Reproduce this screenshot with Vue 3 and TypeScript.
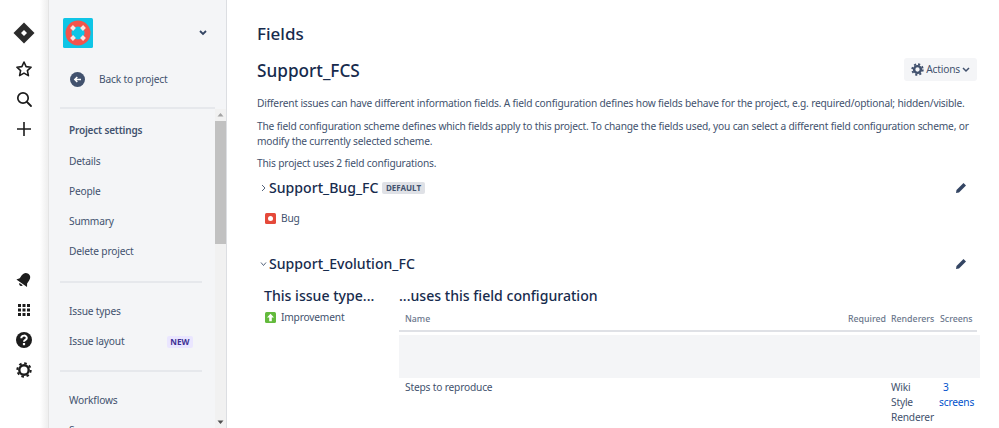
<script setup lang="ts">
const settings = ["Details", "People", "Summary", "Delete project"];
</script>

<template>
  <div class="page">
    <nav class="global">
      <div class="global-group top">
        <svg class="logo" width="22" height="22" viewBox="0 0 22 22"><path fill="#2b2b2b" d="M11 0.500L21.500 11 11 21.500 0.500 11z"/><path fill="#fff" d="M11 8l3 3-3 3-3-3z"/></svg>
        <svg width="18" height="18" viewBox="0 0 18 18"><path fill="none" stroke="#1c1c1c" stroke-width="1.600" stroke-linejoin="round" d="M9 2l2.100 4.600 5 .6-3.700 3.400 1 5L9 13.100l-4.400 2.500 1-5L1.900 7.200l5-.6z"/></svg>
        <svg width="18" height="18" viewBox="0 0 18 18"><circle cx="8" cy="8" r="5.200" fill="none" stroke="#1c1c1c" stroke-width="1.700"/><path stroke="#1c1c1c" stroke-width="1.800" stroke-linecap="round" d="M12 12l4 4"/></svg>
        <svg width="18" height="18" viewBox="0 0 18 18"><path stroke="#1c1c1c" stroke-width="1.600" d="M9 2v14M2 9h14"/></svg>
      </div>
      <div class="global-group bottom">
        <svg width="18" height="18" viewBox="0 0 18 18"><g transform="rotate(35 9 9)" fill="#1c1c1c"><path d="M9 1.500c-3 0-4.500 2.300-4.500 5v3.500L2.500 13h13l-2-3V6.500c0-2.700-1.500-5-4.500-5z"/><path d="M7 14h4c0 2.400-4 2.400-4 0z"/></g></svg>
        <svg width="18" height="18" viewBox="0 0 18 18"><g fill="#1c1c1c"><rect v-for="c in 9" :key="c" :x="3 + ((c - 1) % 3) * 4.500" :y="3 + Math.floor((c - 1) / 3) * 4.500" width="3" height="3"/></g></svg>
        <svg width="18" height="18" viewBox="0 0 18 18"><circle cx="9" cy="9" r="8" fill="#1c1c1c"/><path fill="none" stroke="#fff" stroke-width="2" d="M6.300 7.200c0-3.400 5.500-3.400 5.500-.2 0 1.800-2.800 2-2.800 3.800"/><rect x="7.900" y="12" width="2.200" height="2.200" fill="#fff"/></svg>
        <svg width="18" height="18" viewBox="0 0 18 18"><circle cx="9" cy="9" r="4.700" fill="none" stroke="#1c1c1c" stroke-width="2.400"/><circle cx="9" cy="9" r="6.700" fill="none" stroke="#1c1c1c" stroke-width="2" stroke-dasharray="2.600 2.660"/></svg>
      </div>
    </nav>

    <aside class="sidebar">
      <div class="side-head">
        <div class="project">
          <svg class="avatar" width="30" height="30" viewBox="0 0 30 30">
            <rect width="30" height="30" rx="1.500" fill="#0fc5e6"/>
            <circle cx="15" cy="15" r="9.500" fill="none" stroke="#f4544c" stroke-width="6"/>
            <path stroke="#fbe6e4" stroke-width="4" d="M8.500 8.500l3 3M21.500 8.500l-3 3M8.500 21.500l3-3M21.500 21.500l-3-3"/>
          </svg>
          <svg class="caret" width="10" height="8" viewBox="0 0 10 8"><path fill="none" stroke="#344563" stroke-width="1.800" d="M2 2l3 3 3-3"/></svg>
        </div>
        <div class="back">
          <svg width="15" height="15" viewBox="0 0 15 15"><circle cx="7.500" cy="7.500" r="7.500" fill="#42526e"/><path fill="none" stroke="#fff" stroke-width="1.500" d="M11 7.500H5M7.300 5L4.800 7.500 7.300 10"/></svg>
          <span>Back to project</span>
        </div>
      </div>
      <div class="side-body">
        <div class="menu">
          <div class="menu-title">Project settings</div>
          <div v-for="item in settings" :key="item" class="menu-item">{{ item }}</div>
          <div class="sep"></div>
          <div class="menu-item">Issue types</div>
          <div class="menu-item">Issue layout<span class="lozenge-new">NEW</span></div>
          <div class="sep short"></div>
          <div class="menu-item">Workflows</div>
          <div class="menu-item">Screens</div>
        </div>
        <div class="scrollbar">
          <svg width="11" height="12" viewBox="0 0 11 12"><path fill="#a3a3a3" d="M5.500 4l3 3.500h-6z"/></svg>
          <div class="thumb"></div>
          <div class="track"></div>
          <svg width="11" height="12" viewBox="0 0 11 12"><path fill="#505050" d="M5.500 8l3-3.500h-6z"/></svg>
        </div>
      </div>
    </aside>

    <main class="content">
      <h1>Fields</h1>
      <div class="title-row">
        <h2>Support_FCS</h2>
        <button class="actions">
          <svg width="13" height="13" viewBox="0 0 18 18"><circle cx="9" cy="9" r="4.700" fill="none" stroke="#42526e" stroke-width="3.400"/><circle cx="9" cy="9" r="7.300" fill="none" stroke="#42526e" stroke-width="2.600" stroke-dasharray="2.900 2.830"/></svg>
          <span>Actions</span>
          <svg width="8" height="6" viewBox="0 0 8 6"><path fill="none" stroke="#42526e" stroke-width="1.500" d="M1 1l3 3 3-3"/></svg>
        </button>
      </div>
      <p class="first">Different issues can have different information fields. A field configuration defines how fields behave for the project, e.g. required/optional; hidden/visible.</p>
      <p>The field configuration scheme defines which fields apply to this project. To change the fields used, you can select a different field configuration scheme, or modify the currently selected scheme.</p>
      <p>This project uses 2 field configurations.</p>

      <section class="fc-head bug-head">
        <svg class="twist" width="7" height="8" viewBox="0 0 7 8"><path fill="none" stroke="#42526e" stroke-width="0.900" d="M2 1l3 3-3 3"/></svg>
        <h3>Support_Bug_FC</h3>
        <span class="lozenge">DEFAULT</span>
        <svg class="pencil" width="12" height="12" viewBox="0 0 12 12"><path fill="#344563" d="M8.500 1l2.500 2.500-7 7L1 11l.5-3z"/></svg>
      </section>
      <div class="issue bug">
        <svg width="11" height="11" viewBox="0 0 11 11"><rect width="11" height="11" rx="1.500" fill="#e5493a"/><circle cx="5.500" cy="5.500" r="2.500" fill="#fff"/></svg>
        <span>Bug</span>
      </div>

      <section class="fc-head evo-head">
        <svg class="twist" width="7" height="8" viewBox="0 0 7 8"><path fill="none" stroke="#42526e" stroke-width="0.900" d="M1 2.500l2.500 3 2.500-3"/></svg>
        <h3>Support_Evolution_FC</h3>
        <svg class="pencil" width="12" height="12" viewBox="0 0 12 12"><path fill="#344563" d="M8.500 1l2.500 2.500-7 7L1 11l.5-3z"/></svg>
      </section>

      <div class="config">
        <div class="types">
          <h4>This issue type...</h4>
          <div class="issue">
            <svg width="11" height="11" viewBox="0 0 11 11"><rect width="11" height="11" rx="1.500" fill="#63ba3c"/><path fill="#fff" d="M5.500 1.800L9 5.500H6.800v3.700H4.200V5.500H2z"/></svg>
            <span>Improvement</span>
          </div>
        </div>
        <div class="uses">
          <h4>...uses this field configuration</h4>
          <table>
            <thead>
              <tr>
                <th class="c-name">Name</th>
                <th class="c-req">Required</th>
                <th class="c-rend">Renderers</th>
                <th class="c-scr">Screens</th>
              </tr>
            </thead>
            <tbody>
              <tr class="blank"><td colspan="4"></td></tr>
              <tr>
                <td>Steps to reproduce</td>
                <td></td>
                <td>Wiki Style Renderer</td>
                <td class="link-cell"><a>3 screens</a></td>
              </tr>
            </tbody>
          </table>
        </div>
      </div>
    </main>
  </div>
</template>

<style>
html, body { margin: 0; overflow: hidden; background: #fff; }
</style>

<style scoped>
.page {
  display: flex;
  width: 999px;
  height: 428px;
  overflow: hidden;
  font: 10.200px/15px "Noto Sans", sans-serif;
  letter-spacing: -0.18px;
  color: #172b4d;
}
.global {
  width: 48px;
  flex: none;
  background: linear-gradient(to right, #fff 40px, #f0f0f0 47px);
  display: flex;
  flex-direction: column;
  justify-content: space-between;
}
.global-group { display: flex; flex-direction: column; align-items: center; width: 48px; }
.global-group.top { padding-top: 22px; gap: 12px; }
.logo { margin-bottom: 4px; }
.global-group.bottom { padding-bottom: 49px; gap: 12px; }
.sidebar {
  width: 179px;
  flex: none;
  box-sizing: border-box;
  background: #f4f5f7;
  border-right: 1px solid #dcdee2;
  border-left: 1px solid #e4e4e4;
  display: flex;
  flex-direction: column;
  color: #42526e;
}
.side-head { height: 107px; flex: none; margin: 0 11px; border-bottom: 2px solid #e6e8ec; }
.project { display: flex; align-items: center; justify-content: space-between; padding: 18px 7px 0 3px; }
.back { display: flex; align-items: center; gap: 14px; padding: 24px 0 0 10px; }
.side-body { flex: 1; display: flex; min-height: 0; }
.menu { flex: 1; padding-top: 14px; }
.menu-title { font-weight: 600; font-size: 10px; padding-left: 20px; height: 30px; }
.menu-item { height: 30px; padding: 1px 22px 0 20px; display: flex; justify-content: space-between; align-items: flex-start; box-sizing: border-box; }
.sep { height: 2px; background: #e6e8ec; margin: 8px 13px 20px 11px; }
.sep.short { margin-top: 7px; }
.lozenge-new {
  font-size: 8.200px;
  font-weight: 700;
  letter-spacing: 0;
  color: #403294;
  background: #eae6ff;
  border-radius: 2px;
  padding: 0 3.500px;
  line-height: 12px;
  margin-top: 2px;
}
.scrollbar {
  width: 11px;
  flex: none;
  background: #f1f1f1;
  display: flex;
  flex-direction: column;
}
.thumb { height: 123px; background: #c1c1c1; }
.track { flex: 1; }
.content { flex: 1; min-width: 0; padding: 0 19px 0 30px; }
h1, h2, h3, h4, p { margin: 0; font-weight: 400; letter-spacing: 0; }
h1 { font-size: 17px; font-weight: 500; line-height: 24px; padding-top: 22px; }
.title-row { display: flex; justify-content: space-between; align-items: flex-start; margin-top: 13px; height: 24px; }
h2 { font-size: 17.200px; font-weight: 500; line-height: 24px; }
.actions {
  display: flex;
  align-items: center;
  gap: 2px;
  height: 23px;
  padding: 0 7px;
  margin: -1px 3px 0 0;
  border: 0;
  border-radius: 3px;
  background: #f4f5f7;
  font: inherit;
  letter-spacing: inherit;
  color: #42526e;
}
p { color: #42526e; letter-spacing: -0.18px; }
p.first { margin-top: 13px; }
p + p { margin-top: 7.500px; }
.fc-head { display: flex; align-items: center; }
.fc-head h3 { font-size: 14.100px; font-weight: 500; line-height: 20px; margin-left: 2px; }
.bug-head { margin-top: 6.500px; }
.evo-head { margin-top: 28.500px; }
.twist { margin-left: 3px; }
.lozenge {
  margin: 1px 0 0 4px;
  font-size: 8px;
  font-weight: 700;
  letter-spacing: 0;
  line-height: 12px;
  padding: 0 3.500px;
  background: #dfe1e6;
  color: #42526e;
  border-radius: 2px;
}
.pencil { margin-left: auto; margin-right: 13px; }
.issue { display: flex; align-items: center; gap: 5px; color: #42526e; padding-left: 8px; }
.issue.bug { margin-top: 13px; }
.config { display: flex; margin-top: 12px; }
.types { width: 142px; flex: none; }
.types h4, .uses h4 { font-size: 14.100px; font-weight: 500; line-height: 20px; }
.types h4 { padding-left: 7px; }
.types .issue { margin-top: 3.500px; }
.uses { flex: 1; min-width: 0; }
table { width: 100%; border-collapse: separate; border-spacing: 0; table-layout: fixed; margin-top: 3px; color: #42526e; }
th { font-weight: 500; font-size: 8.800px; letter-spacing: 0; text-align: left; color: #6b778c; padding: 3px 0 3px 6px; border-bottom: 2px solid #dfe1e6; line-height: 15px; }
th.c-scr {
  border-bottom: 0;
  padding-bottom: 5px;
  background: linear-gradient(#dfe1e6, #dfe1e6) no-repeat left bottom / calc(100% - 3px) 2px;
}
td { padding: 2px 0 2px 6px; vertical-align: top; }
.c-req { width: 37px; }
.c-rend { width: 43px; }
.c-scr { width: 40px; }
.blank td { height: 43px; background: #f4f5f7; background-clip: padding-box; border-top: 3px solid #fff; padding: 0; }
a { color: #0052cc; }
.link-cell { padding-left: 5px; text-indent: 4px; }
</style>
